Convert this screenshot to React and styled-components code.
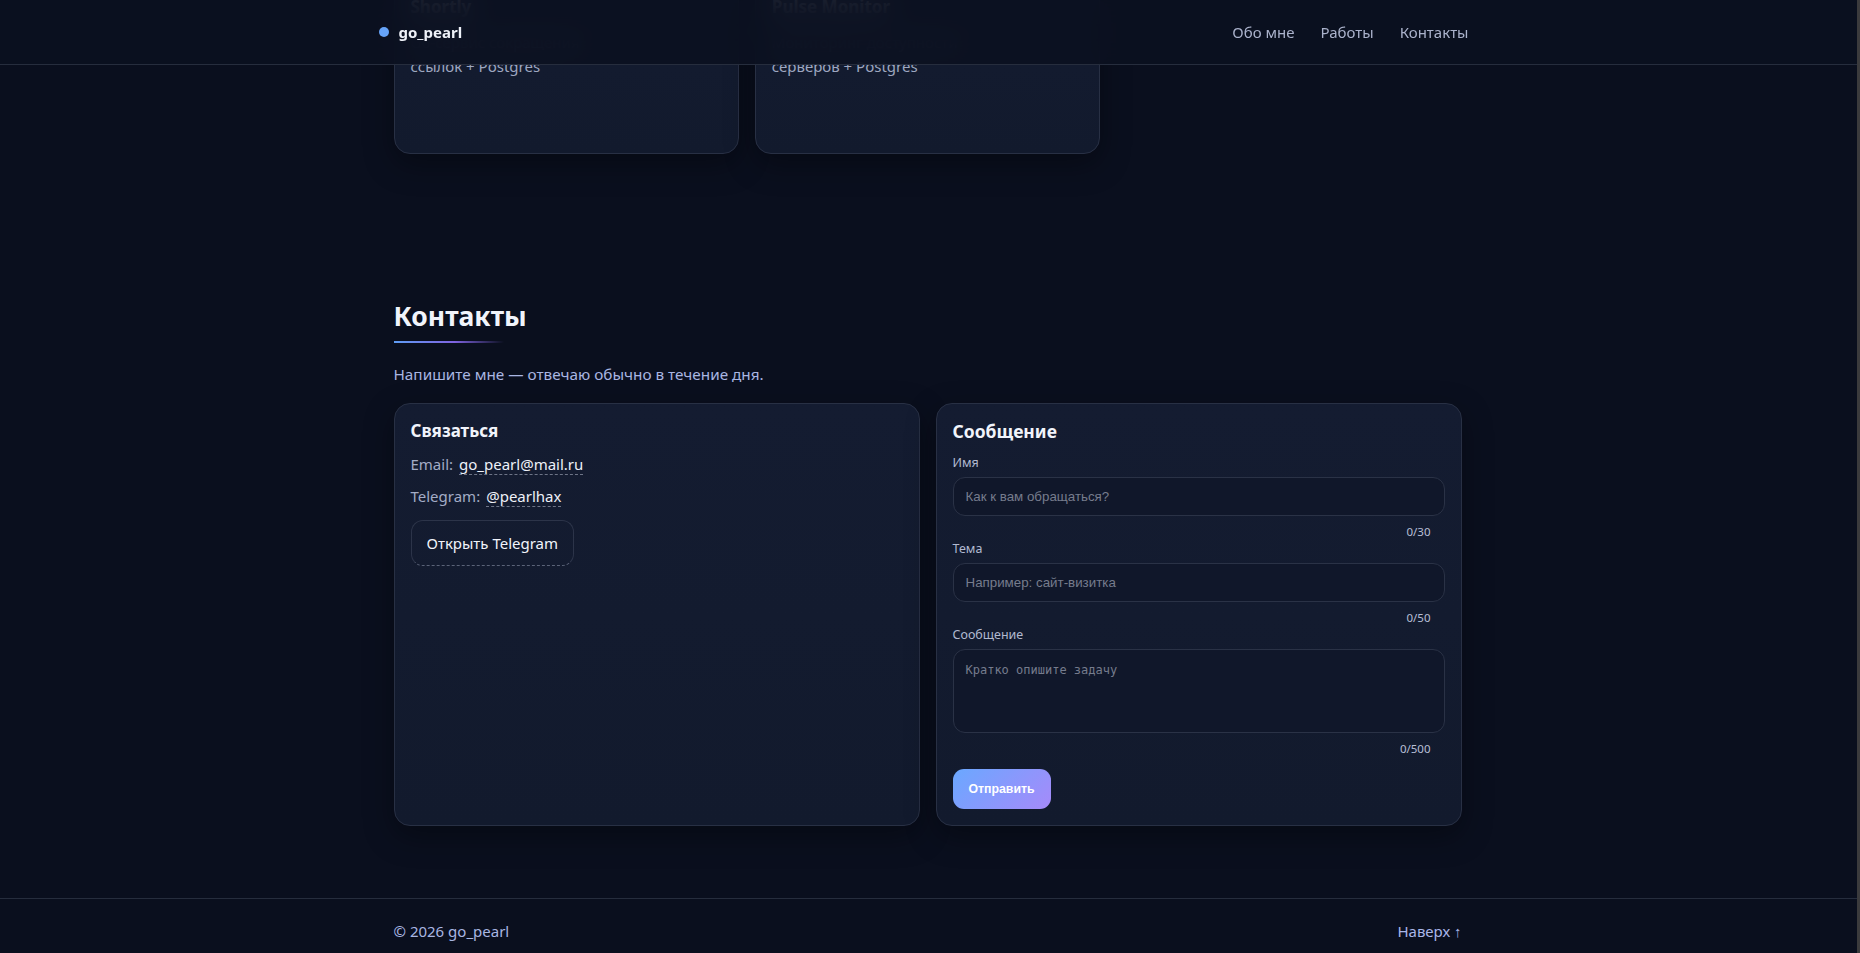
import React, { useLayoutEffect, useRef } from "react";
import styled, { createGlobalStyle } from "styled-components";

const Global = createGlobalStyle`
  html, body { margin: 0; height: 100%; background: #0a0f1e; }
  body {
    font-family: "Noto Sans", "Open Sans", sans-serif;
    color: #e6e9f2;
    overflow: hidden;
  }
  *, *::before, *::after { box-sizing: border-box; }
`;

const Shell = styled.div`
  display: flex;
  height: 100vh;
`;

const Scroller = styled.div`
  flex: 1;
  min-width: 0;
  overflow-y: auto;
  scrollbar-width: none;
  &::-webkit-scrollbar { display: none; }
`;

const ScrollTrack = styled.div`
  flex: none;
  width: 3px;
  background: #3b3b3d;
`;

const Header = styled.header`
  position: sticky;
  top: 0;
  z-index: 10;
  height: 65px;
  border-bottom: 1px solid #262d3d;
  background: rgba(11, 16, 32, 0.91);
  -webkit-backdrop-filter: blur(14px);
  backdrop-filter: blur(14px);
`;

const HeaderInner = styled.div`
  max-width: 1100px;
  height: 100%;
  margin: 0 auto;
  display: flex;
  align-items: center;
  justify-content: space-between;
`;

const Logo = styled.a`
  display: flex;
  align-items: center;
  gap: 10px;
  font-weight: 700;
  font-size: 15px;
  color: #eef1f8;
  text-decoration: none;
`;

const Dot = styled.span`
  width: 10px;
  height: 10px;
  border-radius: 50%;
  background: #66a3f8;
`;

const Nav = styled.nav`
  display: flex;
  gap: 6px;
`;

const NavLink = styled.a`
  padding: 8px 10px;
  font-size: 15px;
  color: #aab2cb;
  text-decoration: none;
`;

const Container = styled.div`
  max-width: 1100px;
  margin: 0 auto;
  padding: 0 17px 0 15px;
`;

const Section = styled.section`
  padding: ${(p) => (p.$flushTop ? 0 : 72)}px 0 72px;
`;

const Hero = styled.section`
  padding: 140px 0 100px;
`;

const HeroTitle = styled.h1`
  margin: 0 0 16px;
  font-size: 48px;
  color: #f1f4fb;
`;

const Lead = styled.p`
  margin: 0;
  font-size: 18px;
  color: #a9b3cc;
`;

const H2 = styled.h2`
  margin: 0;
  font-size: 26.5px;
  line-height: 36px;
  font-weight: 700;
  color: #f1f4fb;
  &::after {
    content: "";
    display: block;
    width: 110px;
    height: 2px;
    margin-top: 7px;
    background: linear-gradient(90deg, #5f9df5 0%, #7f63e0 55%, rgba(127, 99, 224, 0) 100%);
  }
`;

const Sub = styled.p`
  margin: 20px 0 0;
  font-size: 15.3px;
  line-height: 22px;
  color: #a9b6e2;
`;

const WorksGrid = styled.div`
  margin-top: 18px;
  display: grid;
  grid-template-columns: repeat(3, 1fr);
  gap: 16px;
`;

const Card = styled.div`
  border: 1px solid #283044;
  border-radius: 16px;
  padding: 16px;
  background: linear-gradient(180deg, #141c31 0%, #121a2d 100%);
  box-shadow: 0 10px 30px rgba(0, 0, 0, 0.35);
`;

const WorkCard = styled(Card)`
  min-height: 175px;
`;

const CardTitle = styled.h3`
  margin: 0 0 ${(p) => p.$gap ?? 12}px;
  font-size: ${(p) => p.$size || 17}px;
  line-height: 22px;
  font-weight: 700;
  color: #f1f4fb;
`;

const WorkDesc = styled.p`
  margin: 0;
  font-size: 15px;
  line-height: 24px;
  color: #9ea7c0;
`;

const TwoCols = styled.div`
  margin-top: 18px;
  display: grid;
  grid-template-columns: 1fr 1fr;
  gap: 16px;
`;

const ContactCard = styled(Card)`
  display: flex;
  flex-direction: column;
  align-items: flex-start;
`;

const Row = styled.div`
  font-size: 15px;
  line-height: 24px;
  color: #a3acc6;
  margin-top: ${(p) => p.$mt}px;
`;

const InlineLink = styled.a`
  margin-left: 6px;
  color: #eef1f8;
  text-decoration: none;
  border-bottom: 1px dashed rgba(200, 206, 222, 0.5);
`;

const GhostButton = styled.a`
  margin-top: 12px;
  padding: 11px 15px;
  font-size: 15px;
  line-height: 22px;
  color: #f1f4fb;
  text-decoration: none;
  border: 1px solid #2c3449;
  border-bottom: 1px dashed #5b6378;
  border-radius: 12px;
`;

const Form = styled.form`
  display: flex;
  flex-direction: column;
`;

const Label = styled.label`
  font-size: 12.5px;
  line-height: 18px;
  color: #b1b9d0;
  margin-bottom: 5px;
`;

const fieldBase = `
  width: 100%;
  background: #10172a;
  border: 1px solid #2a3246;
  border-radius: 12px;
  color: #e6e9f2;
  outline: none;
  &::placeholder { color: #767c8d; }
`;

const Input = styled.input`
  ${fieldBase}
  height: 39px;
  padding: 0 12px;
  font-family: "Liberation Sans", Arial, sans-serif;
  font-size: 13.33px;
`;

const TextArea = styled.textarea`
  ${fieldBase}
  display: block;
  height: 84px;
  padding: 12px;
  resize: none;
  font-family: "DejaVu Sans Mono", monospace;
  font-size: 12px;
  line-height: 16px;
`;

const Counter = styled.div`
  margin-top: 8px;
  padding-right: 14px;
  text-align: right;
  font-size: 11.5px;
  line-height: 16px;
  color: #b7bfd6;
`;

const Submit = styled.button`
  align-self: flex-start;
  margin-top: 12px;
  height: 40px;
  padding: 0 16px;
  border: none;
  border-radius: 11px;
  background: linear-gradient(135deg, #6aa8ff 0%, #a68afa 100%);
  color: #ffffff;
  font-family: "Liberation Sans", Arial, sans-serif;
  font-weight: 700;
  font-size: 12.3px;
`;

const Footer = styled.footer`
  border-top: 1px solid #262d3d;
  padding: 22px 0 12px;
`;

const FooterInner = styled(Container)`
  display: flex;
  justify-content: space-between;
  font-size: 15px;
  line-height: 20px;
  color: #a9b6e2;
`;

const FooterLink = styled.a`
  color: #a9b6e8;
  text-decoration: none;
`;

const works = [
  { t: "Task Tracker", d: ["Трекер задач на Go", "с REST API + Redis"] },
  { t: "Chat Server", d: ["Чат на WebSocket", "с комнатами + Redis"] },
  { t: "Auth Service", d: ["Сервис авторизации", "JWT + Postgres"] },
  { t: "Shortly", d: ["Go-сервис сокращения", "ссылок + Postgres"] },
  { t: "Pulse Monitor", d: ["Мониторинг доступности", "серверов + Postgres"] },
];

function Field({ label, placeholder, max, area }) {
  return (
    <>
      <Label>{label}</Label>
      {area ? <TextArea placeholder={placeholder} /> : <Input placeholder={placeholder} />}
      <Counter>0/{max}</Counter>
    </>
  );
}

export default function App() {
  const ref = useRef(null);
  useLayoutEffect(() => {
    const el = ref.current;
    if (el) el.scrollTop = el.scrollHeight;
  }, []);

  return (
    <>
      <Global />
      <Shell>
        <Scroller ref={ref}>
          <Header>
            <HeaderInner>
              <Logo href="#top">
                <Dot />
                go_pearl
              </Logo>
              <Nav>
                <NavLink href="#about">Обо мне</NavLink>
                <NavLink href="#works">Работы</NavLink>
                <NavLink href="#contacts">Контакты</NavLink>
              </Nav>
            </HeaderInner>
          </Header>
          <main>
            <Container>
              <Hero id="top">
                <HeroTitle>Привет, я go_pearl</HeroTitle>
                <Lead>Backend-разработчик на Go: сервисы, API и базы данных.</Lead>
              </Hero>
              <Section id="about">
                <H2>Обо мне</H2>
                <Sub>Пишу надёжные backend-сервисы на Go, работаю с Postgres, Redis и Docker.</Sub>
              </Section>
              <Section id="works" $flushTop>
                <H2>Работы</H2>
                <Sub>Несколько проектов, которые я сделал.</Sub>
                <WorksGrid>
                  {works.map((w) => (
                    <WorkCard key={w.t}>
                      <CardTitle>{w.t}</CardTitle>
                      <WorkDesc>
                        {w.d[0]}
                        <br />
                        {w.d[1]}
                      </WorkDesc>
                    </WorkCard>
                  ))}
                </WorksGrid>
              </Section>
              <Section id="contacts">
                <H2>Контакты</H2>
                <Sub>Напишите мне — отвечаю обычно в течение дня.</Sub>
                <TwoCols>
                  <ContactCard>
                    <CardTitle $gap={0}>Связаться</CardTitle>
                    <Row $mt={10}>
                      Email:
                      <InlineLink href="mailto:go_pearl@mail.ru">go_pearl@mail.ru</InlineLink>
                    </Row>
                    <Row $mt={8}>
                      Telegram:
                      <InlineLink href="#tg">@pearlhax</InlineLink>
                    </Row>
                    <GhostButton href="#tg">Открыть Telegram</GhostButton>
                  </ContactCard>
                  <Card>
                    <CardTitle $size={17.5}>Сообщение</CardTitle>
                    <Form onSubmit={(e) => e.preventDefault()}>
                      <Field label="Имя" placeholder="Как к вам обращаться?" max={30} />
                      <Field label="Тема" placeholder="Например: сайт-визитка" max={50} />
                      <Field label="Сообщение" placeholder="Кратко опишите задачу" max={500} area />
                      <Submit type="submit">Отправить</Submit>
                    </Form>
                  </Card>
                </TwoCols>
              </Section>
            </Container>
          </main>
          <Footer>
            <FooterInner>
              <span>© 2026 go_pearl</span>
              <FooterLink href="#top">Наверх ↑</FooterLink>
            </FooterInner>
          </Footer>
        </Scroller>
        <ScrollTrack />
      </Shell>
    </>
  );
}
